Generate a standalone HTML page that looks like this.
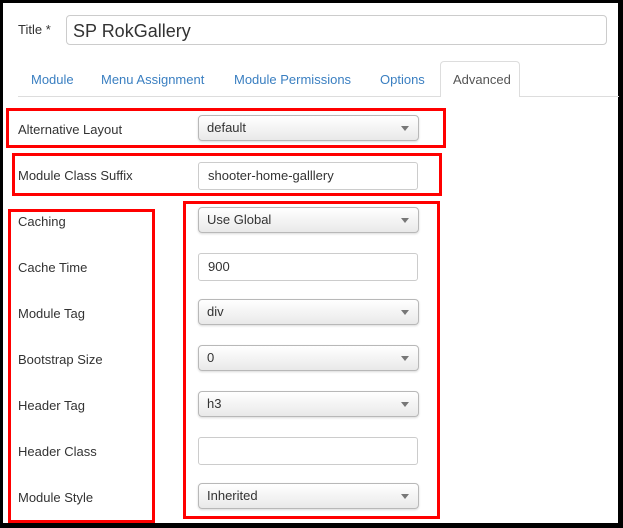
<!DOCTYPE html>
<html><head><style>
body{margin:0;width:623px;height:528px;background:#000;position:relative;overflow:hidden;font-family:"Liberation Sans",Arial,sans-serif;font-size:13px;color:#333}
.page{position:absolute;left:3px;top:3px;width:615px;height:520px;background:#fff}
.a{position:absolute}
.lbl{position:absolute;left:18px;font-size:13px;color:#333;line-height:16px}
.sel{position:absolute;left:198px;width:218px;height:24px;border:1px solid #b8b8b8;border-radius:4px;background:linear-gradient(#fff,#e9e9e9);box-shadow:0 1px 2px rgba(0,0,0,.15);font-size:13px;line-height:24px;padding-left:8px;box-sizing:content-box;width:211px}
.sel:after{content:"";position:absolute;right:9px;top:10px;border-left:4px solid transparent;border-right:4px solid transparent;border-top:5px solid #777}
.inp{position:absolute;left:198px;width:209px;height:26px;border:1px solid #ccc;border-radius:3px;background:#fff;font-size:13px;line-height:26px;padding-left:9px}
.red{position:absolute;border:3px solid #f00;box-sizing:border-box}
.tab{position:absolute;top:72px;color:#3a7fc1;font-size:13px}
</style></head><body>
<div class="page"></div>
<div class="lbl" style="top:22px;left:18px">Title *</div>
<div class="a" style="left:66px;top:15px;width:541px;height:30px;border:1px solid #ccc;border-radius:4px;font-size:18px;line-height:30px;padding-left:6px;box-sizing:border-box;color:#333">SP RokGallery</div>
<div class="a" style="left:18px;top:96px;width:601px;height:1px;background:#ddd"></div>
<div class="tab" style="left:31px">Module</div>
<div class="tab" style="left:101px">Menu Assignment</div>
<div class="tab" style="left:234px">Module Permissions</div>
<div class="tab" style="left:380px">Options</div>
<div class="a" style="left:440px;top:61px;width:80px;height:36px;border:1px solid #ddd;border-bottom:none;border-radius:4px 4px 0 0;background:#fff;box-sizing:border-box"></div>
<div class="tab" style="left:453px;color:#555">Advanced</div>

<div class="lbl" style="top:122px">Alternative Layout</div>
<div class="sel" style="top:115px">default</div>
<div class="lbl" style="top:168px">Module Class Suffix</div>
<div class="inp" style="top:162px;left:198px">shooter-home-galllery</div>

<div class="lbl" style="top:214px">Caching</div>
<div class="sel" style="top:207px">Use Global</div>
<div class="lbl" style="top:260px">Cache Time</div>
<div class="inp" style="top:253px">900</div>
<div class="lbl" style="top:306px">Module Tag</div>
<div class="sel" style="top:299px">div</div>
<div class="lbl" style="top:352px">Bootstrap Size</div>
<div class="sel" style="top:345px">0</div>
<div class="lbl" style="top:398px">Header Tag</div>
<div class="sel" style="top:391px">h3</div>
<div class="lbl" style="top:444px">Header Class</div>
<div class="inp" style="top:437px"></div>
<div class="lbl" style="top:490px">Module Style</div>
<div class="sel" style="top:483px">Inherited</div>

<div class="red" style="left:6px;top:108px;width:440px;height:40px"></div>
<div class="red" style="left:12px;top:153px;width:430px;height:43px"></div>
<div class="red" style="left:8px;top:209px;width:147px;height:314px"></div>
<div class="red" style="left:183px;top:201px;width:257px;height:318px"></div>
</body></html>
